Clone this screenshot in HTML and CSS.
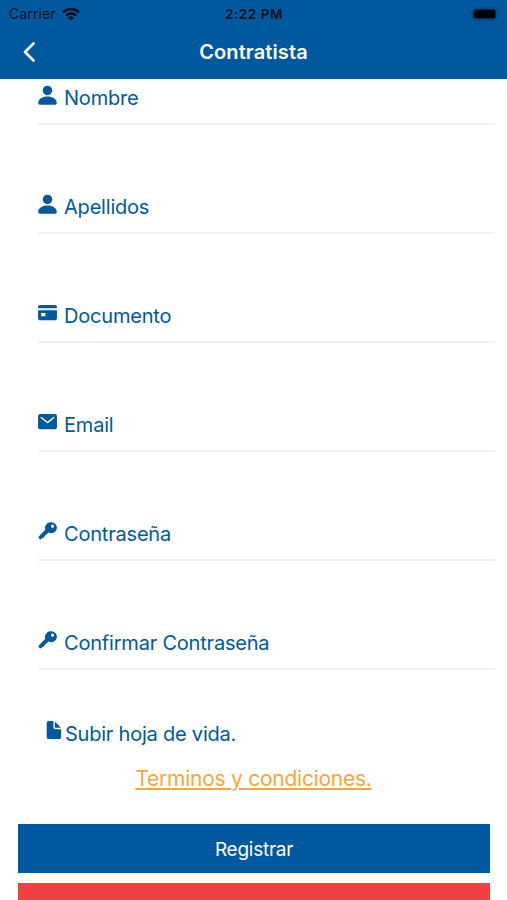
FILE: index.html
```html
<!DOCTYPE html>
<html lang="es">
<head>
<meta charset="utf-8">
<title>Contratista</title>
<link rel="stylesheet" href="styles.css">
</head>
<body>
<svg class="defs" width="0" height="0" aria-hidden="true">
  <symbol id="person" viewBox="0 0 18 20"><circle cx="9" cy="5.200" r="4.500"/><path d="M.2 17.200C.2 13.400 4 11 9 11s8.800 2.400 8.800 6.200c0 1-.6 1.500-1.500 1.500H1.700c-.9 0-1.500-.5-1.500-1.500z"/></symbol>
  <symbol id="key" viewBox="0 0 18 20"><path fill-rule="evenodd" d="M12 1.300a5.300 5.300 0 0 0-5.100 7L.9 14.500c-.5.500-.6 1.200-.2 1.800l.7.900c.4.500 1.100.4 1.600 0l1.400-1.300 1.300-.2.600-1.300 3.700-3.500A5.200 5.200 0 1 0 12 1.300zm1.800 2.100a1.500 1.500 0 1 1 0 3 1.500 1.500 0 0 1 0-3z"/></symbol>
</svg>
<header class="header">
  <div class="status">
    <div class="carrier"><span class="carrier-name">Carrier</span>
      <svg class="wifi" viewBox="0 0 18 14"><g fill="none" stroke="#03101c" stroke-width="2.500"><path d="M1 5.300a11.500 11.500 0 0 1 16 0"/><path d="M4 8.500a7.200 7.200 0 0 1 10 0"/></g><path fill="#03101c" d="M6 10.600a4.400 4.400 0 0 1 6 0L9 13.700z"/></svg>
    </div>
    <span class="time">2:22 PM</span>
    <svg class="battery" viewBox="0 0 30 14"><rect x="1" y="1" width="25" height="12" rx="3.500" fill="none" stroke="#064577"/><rect x="2.500" y="2.500" width="22" height="9" rx="2" fill="#000"/><path d="M27.500 5v4q2-2 0-4" fill="#064577"/></svg>
  </div>
  <div class="nav">
    <svg class="back" viewBox="0 0 14 20"><path d="M11.500 1.500 3 10l8.500 8.500" fill="none" stroke="#fff" stroke-width="2.600" stroke-linecap="round" stroke-linejoin="round"/></svg>
    <h1 class="title">Contratista</h1>
  </div>
</header>
<main class="form">
  <div class="field"><svg class="icon" viewBox="0 0 18 20"><use href="#person"/></svg><span class="label">Nombre</span></div>
  <div class="field"><svg class="icon" viewBox="0 0 18 20"><use href="#person"/></svg><span class="label">Apellidos</span></div>
  <div class="field"><svg class="icon" viewBox="0 0 18 20"><path fill-rule="evenodd" d="M0 5V4c0-1.200.8-2 2-2h14c1.200 0 2 .8 2 2v1zM0 7h18v7.500c0 1.200-.8 2-2 2H2c-1.200 0-2-.8-2-2zm3 2.500v3.200h4V9.500z"/></svg><span class="label">Documento</span></div>
  <div class="field"><svg class="icon" viewBox="0 0 18 20"><rect y="2" width="18" height="14.500" rx="2"/><path d="m3 5.200 6 4.900 6-4.900" fill="none" stroke="#fff" stroke-width="1.300" stroke-linecap="round"/></svg><span class="label">Email</span></div>
  <div class="field"><svg class="icon" viewBox="0 0 18 20"><use href="#key"/></svg><span class="label">Contraseña</span></div>
  <div class="field"><svg class="icon" viewBox="0 0 18 20"><use href="#key"/></svg><span class="label">Confirmar Contraseña</span></div>
  <div class="upload"><svg class="file" viewBox="0 0 15 20"><path d="M2.300 1h4.600v6.200c0 1.200.8 2 2 2h5.700v7.700c0 1.200-.9 2.100-2 2.100H2.300C1 19 .2 18.100.2 16.900V3.100C.2 1.900 1 1 2.300 1z"/><path d="m8.300 1.400 6 6.300H9.200c-.6 0-.9-.3-.9-.9z"/></svg><span class="upload-label">Subir hoja de vida.</span></div>
  <a class="terms">Terminos y condiciones.</a>
  <div class="button primary"><span class="register">Registrar</span></div>
  <div class="button danger"></div>
</main>
</body>
</html>
```
FILE: styles.css
```css
* { box-sizing: border-box; }
body { margin: 0; height: 900px; overflow: hidden; background: #fff; color: #00599f; font-family: Inter, "Liberation Sans", sans-serif; }
.defs { display: block; height: 0; }
.header { height: 79px; background: #00599f; }
.status { height: 27px; display: grid; grid-template-columns: 1fr auto 1fr; align-items: center; padding: 0 6px 0 9px; color: #03101c; font-size: 14px; }
.carrier { display: flex; align-items: center; gap: 6px; }
.carrier-name { letter-spacing: 0.1px; }
.wifi { width: 18px; height: 14px; }
.time { font-weight: 600; font-size: 13.500px; letter-spacing: 0.55px; margin-right: 2px; }
.battery { width: 30px; height: 14px; justify-self: end; }
.nav { height: 50px; display: grid; grid-template-columns: 1fr auto 1fr; align-items: center; padding: 0 22px; }
.back { width: 14px; height: 20px; }
.title { margin: 0; color: #fff; font-size: 20px; font-weight: 600; letter-spacing: 0.1px; }
.field { height: 46px; margin: 0 12px 63px 38px; border-bottom: 2px solid #f1f1f1; display: flex; align-items: flex-start; gap: 7px; }
.icon { width: 19px; height: 21px; margin-top: 6px; fill: currentColor; flex: none; }
.label { font-size: 20px; line-height: 24px; margin-top: 7px; letter-spacing: -0.2px; white-space: nowrap; }
.upload { height: 24px; margin: -12px 0 0 46px; display: flex; gap: 3px; }
.file { width: 16px; height: 20px; margin-top: -1px; fill: currentColor; }
.upload-label { font-size: 20px; line-height: 26px; letter-spacing: -0.22px; }
.terms { display: block; width: max-content; height: 28px; margin: 20px auto 0; font-size: 21px; line-height: 28px; letter-spacing: -0.25px; color: #f7a737; text-decoration: underline; text-decoration-thickness: 1.500px; text-underline-offset: 2px; }
.button { height: 49px; margin: 0 17px 0 18px; }
.primary { margin-top: 31px; background: #00599f; color: #fff; display: flex; align-items: center; justify-content: center; font-size: 19px; letter-spacing: -0.25px; padding-top: 2px; }
.danger { margin-top: 10px; background: #f04040; }
```
